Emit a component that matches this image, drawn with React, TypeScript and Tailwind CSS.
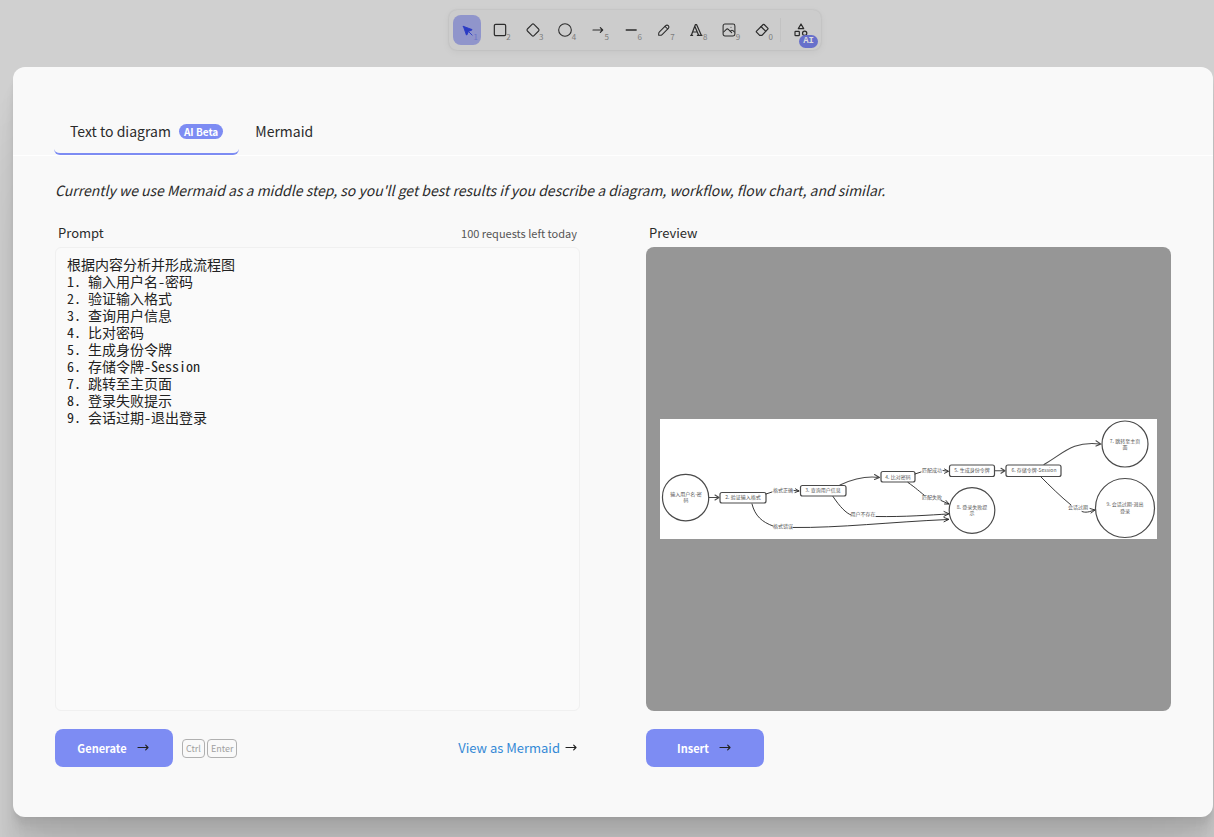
import { useState, type ReactNode } from "react";

type Tool = { label: string; key: string; box: number; stroke: number; art: ReactNode };

const tools: Tool[] = [
  {
    label: "Selection", key: "1", box: 22, stroke: 1.25,
    art: (
      <>
        <path fill="currentColor" d="M6 6l4.153 11.793a.365 .365 0 0 0 .331 .207a.366 .366 0 0 0 .332 -.207l2.184 -4.793l4.787 -1.994a.355 .355 0 0 0 .213 -.323a.355 .355 0 0 0 -.213 -.323l-11.787 -4.36z" />
        <path d="M13.5 13.5l4.5 4.5" />
      </>
    ),
  },
  { label: "Rectangle", key: "2", box: 24, stroke: 1.8, art: <rect x="3.500" y="3.500" width="17" height="17" rx="2" /> },
  {
    label: "Diamond", key: "3", box: 24, stroke: 1.6,
    art: <path d="M10.5 20.4l-6.9 -6.9c-.781 -.781 -.781 -2.219 0 -3l6.9 -6.9c.781 -.781 2.219 -.781 3 0l6.9 6.9c.781 .781 .781 2.219 0 3l-6.9 6.9c-.781 .781 -2.219 .781 -3 0z" />,
  },
  { label: "Ellipse", key: "4", box: 24, stroke: 1.6, art: <circle cx="12" cy="12" r="9.500" /> },
  { label: "Arrow", key: "5", box: 24, stroke: 1.8, art: <path d="M4.500 12h14.500M15.500 15.500l3.500-3.500M15.500 8.500l3.500 3.500" /> },
  { label: "Line", key: "6", box: 20, stroke: 1.6, art: <path d="M4 10h12.500" /> },
  {
    label: "Draw", key: "7", box: 20, stroke: 1.3,
    art: (
      <>
        <path d="m7.643 15.69 7.774-7.773a2.357 2.357 0 1 0-3.334-3.334L4.31 12.357a3.333 3.333 0 0 0-.977 2.357v1.953h1.953c.884 0 1.732-.352 2.357-.977Z" />
        <path d="m11.25 5.417 3.333 3.333" />
      </>
    ),
  },
  {
    label: "Text", key: "8", box: 24, stroke: 1.8,
    art: <path d="M4 20h3M14 20h7M6.9 15h6.9M10.2 6.3L16 20M5 20L11 4h2l7 16" />,
  },
  {
    label: "Image", key: "9", box: 20, stroke: 1.3,
    art: (
      <>
        <path d="M12.5 6.667h.01" />
        <rect x="2.625" y="2.625" width="14.75" height="14.75" rx="2.284" />
        <path d="m3.333 12.5 3.334-3.333c.773-.745 1.726-.745 2.5 0l4.166 4.166" />
        <path d="m11.667 11.667.833-.834c.774-.744 1.726-.744 2.5 0l1.667 1.667" />
      </>
    ),
  },
  {
    label: "Eraser", key: "0", box: 24, stroke: 1.8,
    art: (
      <>
        <path d="M12 20h-3.500l-4.710 -4.8a1 1 0 0 1 0 -1.41l10 -10a1 1 0 0 1 1.41 0l5.500 5.500a1 1 0 0 1 0 1.41l-8.700 9.3" />
        <path d="M17.500 13.800l-7 -7" />
      </>
    ),
  },
];

function Icon({ box, stroke, className, children }: { box: number; stroke: number; className: string; children: ReactNode }) {
  return (
    <svg aria-hidden="true" viewBox={`0 0 ${box} ${box}`} className={className} fill="none" stroke="currentColor" strokeWidth={stroke} strokeLinecap="round" strokeLinejoin="round">
      {children}
    </svg>
  );
}

function ArrowRight({ className }: { className: string }) {
  return (
    <Icon box={16} stroke={1.2} className={className}>
      <path d="M3 7.500h10M10.700 5.200L13 7.500l-2.300 2.300" />
    </Icon>
  );
}

function Toolbar() {
  return (
    <nav aria-label="Shapes" className="flex items-center rounded-lg bg-[#cccccc] p-1 pr-[6px] shadow-[0_0_2px_rgba(0,0,0,0.12),0_2px_8px_rgba(0,0,0,0.05)]">
      <div className="flex w-[323px] justify-between">
        {tools.map((tool, i) => (
          <button
            key={tool.key}
            type="button"
            aria-label={tool.label}
            className={`relative flex h-[30px] w-7 items-center justify-center rounded-lg ${i === 0 ? "bg-[#9095cb] text-[#2a3ac4]" : "text-[#2b2b2b]"}`}
          >
            <Icon box={tool.box} stroke={tool.stroke} className="size-4">{tool.art}</Icon>
            <span className={`absolute right-[3px] bottom-1 text-[8px] leading-none ${i === 0 ? "text-[#6c74c8]" : "text-[#7c7c7c]"}`}>{tool.key}</span>
          </button>
        ))}
      </div>
      <span className="mx-1 h-6 w-px bg-[#c2c2c2]" />
      <button type="button" aria-label="More tools" className="relative ml-[2px] flex h-8 w-7 items-center justify-center text-[#2b2b2b]">
        <Icon box={24} stroke={1.8} className="size-4">
          <path d="M12 3l-4 7h8z" />
          <circle cx="17.500" cy="17" r="3.200" />
          <rect x="3" y="14" width="6.500" height="6.500" rx="1" />
        </Icon>
        <span className="absolute -right-[3px] -bottom-[2px] flex h-[13px] items-center rounded-full bg-[#6770cb] px-1 font-['Liberation_Mono',monospace] text-[9px] leading-none font-bold text-[#dddddd]">AI</span>
      </button>
    </nav>
  );
}

type Label = { x: number; y: number; text: string };

const labels: Label[] = [
  { x: 26, y: 77, text: "输入用户名-密" },
  { x: 26, y: 83, text: "码" },
  { x: 83, y: 80, text: "2. 验证输入格式" },
  { x: 123, y: 73, text: "格式正确" },
  { x: 163, y: 73, text: "3. 查询用户信息" },
  { x: 123, y: 109, text: "格式错误" },
  { x: 203, y: 97, text: "用户不存在" },
  { x: 238, y: 60, text: "4. 比对密码" },
  { x: 272, y: 53, text: "匹配成功" },
  { x: 272, y: 80, text: "匹配失败" },
  { x: 312, y: 53, text: "5. 生成身份令牌" },
  { x: 312, y: 90, text: "8. 登录失败提" },
  { x: 312, y: 96, text: "示" },
  { x: 374, y: 53, text: "6. 存储令牌-Session" },
  { x: 465, y: 24, text: "7. 跳转至主页" },
  { x: 465, y: 30, text: "面" },
  { x: 418, y: 90, text: "会话过期" },
  { x: 465, y: 87, text: "9. 会话过期-退出" },
  { x: 465, y: 94, text: "登录" },
];

function Diagram() {
  return (
    <svg viewBox="0 0 497 120" role="img" aria-label="Login flow chart" className="block w-full bg-white" fill="none" stroke="#4a4a4a" strokeWidth="1.1" strokeLinecap="round" strokeLinejoin="round">
      <g strokeWidth="1.200">
        <path d="M2.500 79C2 66 12 55 26 55.300C39 55.500 48.500 66 48.700 78.500C49 92 38 102 25.500 101.800C12.500 101.500 2.800 91.500 2.500 79z" />
        <circle cx="312" cy="91.500" r="22.800" />
        <circle cx="465" cy="25" r="23" />
        <circle cx="465" cy="89" r="29.500" />
        <rect x="60" y="73.500" width="46" height="10.500" rx="2" />
        <rect x="140.500" y="66.500" width="45.500" height="10.500" rx="2" />
        <rect x="221" y="52.500" width="34" height="10.500" rx="2" />
        <rect x="289.500" y="46" width="45" height="11.500" rx="2" />
        <rect x="346" y="46" width="55" height="11.500" rx="2" />
      </g>
      <path d="M49 78.500h10M55 76l4 2.500l-4 2.500" />
      <g stroke="#222222" strokeWidth="0.900">
        <path d="M106 75l6-2M134 71.500l5 .5M135.500 69.800l3.500 2.200l-4 1.500" />
        <path d="M92 85C95 97 102 103 113 107M133 108.500C180 109 230 103 288 100.500M284 98.500l5 1.800l-5 2.500" />
        <path d="M173 77.500C180 88 186 94 191 96M216 97.500C245 98 270 96 288 95M284 92.500l5 2.300l-5 2.500" />
        <path d="M255 55l6-2M283 51.500l5 .8M284.500 50l4 2.300l-4 2" />
        <path d="M248 63.500C256 69 260 73 264 76M281 81.500l8 3.500M286 81.500l3 3.500h-4.500" />
        <path d="M381 58C390 67 400 77 411 86M422 92.500C425 94 430 93 434 91M430 89.500l5 1.500l-4 3" />
      </g>
      <path d="M180 66C195 59 207 57 219 58.500M214.500 55.500l5 3l-5 2" />
      <path d="M335 51.800h10M341 49.300l4 2.500l-4 2.500" />
      <path d="M384 45.500C404 34 412 22 440 25M436 21.800l5 3.300l-5 2" />
      <g fill="#555555" stroke="none" fontSize="5" textAnchor="middle">
        {labels.map((l) => (
          <text key={`${l.x}-${l.y}`} x={l.x} y={l.y}>{l.text}</text>
        ))}
      </g>
    </svg>
  );
}

const initialPrompt = `根据内容分析并形成流程图
1. 输入用户名-密码
2. 验证输入格式
3. 查询用户信息
4. 比对密码
5. 生成身份令牌
6. 存储令牌-Session
7. 跳转至主页面
8. 登录失败提示
9. 会话过期-退出登录`;

function PrimaryButton({ children }: { children: string }) {
  return (
    <button type="button" className="flex h-[38px] w-[118px] items-center justify-center gap-2 rounded-lg bg-[#7d8cf3] text-[11px] font-bold text-white">
      {children}
      <ArrowRight className="size-4 text-[#222222]" />
    </button>
  );
}

export default function App() {
  const [prompt, setPrompt] = useState(initialPrompt);

  return (
    <div className="flex min-h-screen flex-col overflow-hidden bg-[#d0d0d0] font-['Noto_Sans_CJK_SC','Open_Sans',sans-serif] text-[#2b2b2b]">
      <header className="flex justify-center pt-[10px] pb-[17px] pl-14">
        <Toolbar />
      </header>

      <main role="dialog" aria-label="Text to diagram" className="relative mr-px mb-5 ml-[13px] flex-1 rounded-xl bg-[#f9f9f9] pt-10 pb-[50px] shadow-[0_100px_80px_rgba(0,0,0,0.07),0_42px_33px_rgba(0,0,0,0.05),0_22px_18px_rgba(0,0,0,0.04),0_13px_10px_rgba(0,0,0,0.04),0_7px_5px_rgba(0,0,0,0.03),0_3px_2px_rgba(0,0,0,0.02)]">
        <div role="tablist" className="flex border-b border-white px-[41px]">
          <button type="button" role="tab" aria-selected="true" className="flex h-12 items-center gap-2 rounded-md border-b-2 border-[#7d8cf3] px-4 pt-[2px] text-sm">
            Text to diagram
            <span className="rounded-full bg-[#7d8cf3] px-[5px] text-[10px] leading-[15px] font-bold text-white">AI Beta</span>
          </button>
          <button type="button" role="tab" aria-selected="false" className="flex h-12 items-center border-b-2 border-transparent px-4 pt-[2px] text-sm">
            Mermaid
          </button>
        </div>

        <div className="px-[42px]">
          <p className="pt-[22px] pb-[23px] text-sm leading-6 italic">
            Currently we use Mermaid as a middle step, so you'll get best results if you describe a diagram, workflow, flow chart, and similar.
          </p>

          <div className="grid grid-cols-2 gap-x-[66px]">
            <section>
              <div className="flex h-[22px] items-start justify-between px-[3px]">
                <label htmlFor="prompt" className="text-[13px] leading-4">Prompt</label>
                <span className="text-[11px] leading-4 text-[#555555]">100 requests left today</span>
              </div>
              <textarea
                id="prompt"
                value={prompt}
                onChange={(e) => setPrompt(e.target.value)}
                spellCheck={false}
                className="block h-[464px] w-full resize-none rounded-md border border-[#f0f0f0] bg-[#fafafa] px-[11px] py-2 font-['Noto_Sans_Mono_CJK_SC','Liberation_Mono','Noto_Sans_CJK_SC',monospace] text-sm leading-[17px] text-[#222222] outline-none"
              />
              <div className="mt-[18px] flex items-center">
                <PrimaryButton>Generate</PrimaryButton>
                <div className="ml-[9px] flex gap-[2px] text-[9px] leading-[17px] text-[#a0a0a0]">
                  <kbd className="rounded border border-[#b0b0b0] px-[3px] font-['Noto_Sans_CJK_SC',sans-serif]">Ctrl</kbd>
                  <kbd className="rounded border border-[#b0b0b0] px-[3px] font-['Noto_Sans_CJK_SC',sans-serif]">Enter</kbd>
                </div>
                <a href="#mermaid" className="mr-px ml-auto flex items-center gap-[3px] text-[13px] text-[#3489d6]">
                  View as Mermaid
                  <ArrowRight className="size-4 text-[#222222]" />
                </a>
              </div>
            </section>

            <section>
              <div className="flex h-[22px] items-start px-[3px]">
                <h2 className="text-[13px] leading-4">Preview</h2>
              </div>
              <div className="flex h-[464px] items-center rounded-lg bg-[#969696] px-[14px]">
                <Diagram />
              </div>
              <div className="mt-[18px] flex">
                <PrimaryButton>Insert</PrimaryButton>
              </div>
            </section>
          </div>
        </div>
      </main>
    </div>
  );
}
